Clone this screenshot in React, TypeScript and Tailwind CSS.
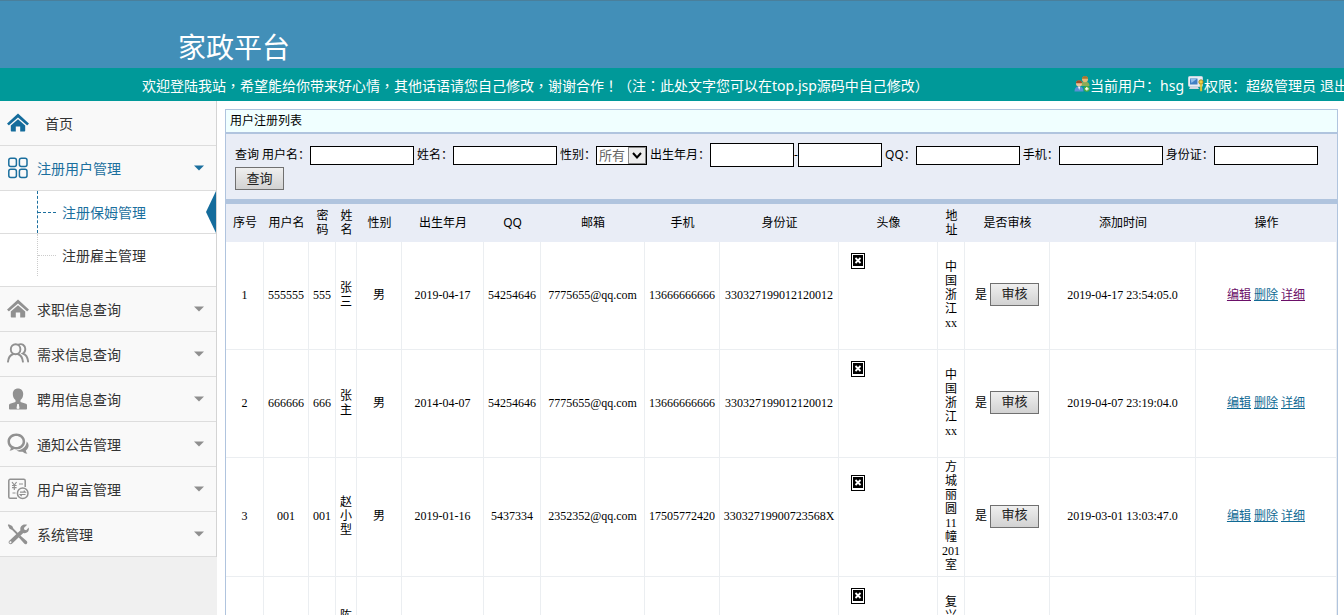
import { ReactNode } from 'react'

interface MenuItem {
  label: string
  icon: ReactNode
}

interface User {
  id: number
  username: string
  password: string
  name: string
  gender: string
  birthday: string
  qq: string
  email: string
  phone: string
  idCard: string
  address: string
  approved: string
  createdAt: string
  visited?: boolean
}

const users: User[] = [
  { id: 1, username: '555555', password: '555', name: '张三', gender: '男', birthday: '2019-04-17', qq: '54254646', email: '7775655@qq.com', phone: '13666666666', idCard: '330327199012120012', address: '中国浙江xx', approved: '是', createdAt: '2019-04-17 23:54:05.0', visited: true },
  { id: 2, username: '666666', password: '666', name: '张主', gender: '男', birthday: '2014-04-07', qq: '54254646', email: '7775655@qq.com', phone: '13666666666', idCard: '330327199012120012', address: '中国浙江xx', approved: '是', createdAt: '2019-04-07 23:19:04.0' },
  { id: 3, username: '001', password: '001', name: '赵小型', gender: '男', birthday: '2019-01-16', qq: '5437334', email: '2352352@qq.com', phone: '17505772420', idCard: '33032719900723568X', address: '方城丽圆11幢201室', approved: '是', createdAt: '2019-03-01 13:03:47.0' },
  { id: 4, username: '002', password: '002', name: '陈小型', gender: '女', birthday: '2019-01-16', qq: '5437334', email: '2352352@qq.com', phone: '17505772420', idCard: '330327199007235681', address: '复兴小区xx', approved: '是', createdAt: '2019-03-01 13:03:47.0' },
]

const columns = [
  { title: '序号', width: 'w-[38px]' },
  { title: '用户名', width: 'w-[45px]' },
  { title: '密码', width: 'w-[27px]' },
  { title: '姓名', width: 'w-[21px]' },
  { title: '性别', width: 'w-[45px]' },
  { title: '出生年月', width: 'w-[82px]' },
  { title: 'QQ', width: 'w-[57px]' },
  { title: '邮箱', width: 'w-[104px]' },
  { title: '手机', width: 'w-[75px]' },
  { title: '身份证', width: 'w-[119px]' },
  { title: '头像', width: 'w-[99px]' },
  { title: '地址', width: 'w-[27px]' },
  { title: '是否审核', width: 'w-[85px]' },
  { title: '添加时间', width: 'w-[146px]' },
  { title: '操作', width: '' },
]

function HomeIcon() {
  return (
    <svg width="22" height="22" viewBox="0 0 22 22" fill="currentColor">
      <path d="M11 1.6 21.6 11.2a.6.6 0 0 1 0 .9l-1 .9a.7.7 0 0 1-.9 0L11 5.4 2.3 13a.7.7 0 0 1-.9 0l-1-.9a.6.6 0 0 1 0-.9z" />
      <path d="M11 7.2l7.2 6.3v5c0 .6-.4 1-1 1h-4v-5H8.8v5h-4c-.6 0-1-.4-1-1v-5z" />
    </svg>
  )
}

function GridIcon() {
  return (
    <svg width="22" height="22" viewBox="0 0 22 22" fill="none" stroke="currentColor" strokeWidth="1.5">
      <rect x="1.8" y="1.3" width="7.6" height="8.2" rx="2" />
      <rect x="12.4" y="1.3" width="7.6" height="8.2" rx="2" />
      <rect x="1.8" y="12.3" width="7.6" height="8.2" rx="2" />
      <rect x="12.4" y="12.3" width="7.6" height="8.2" rx="2" />
    </svg>
  )
}

function UsersIcon() {
  return (
    <svg width="22" height="22" viewBox="0 0 22 22" fill="none" stroke="currentColor" strokeWidth="1.9" strokeLinecap="round">
      <ellipse cx="8.6" cy="6.2" rx="4.8" ry="5" />
      <path d="M1 18.600c.3-3.600 2-6.400 5.300-7.600M10.800 11c3.100 1.200 4.800 4 5.100 7.600" />
      <path d="M11.500 1.700c3.400-1.600 6.800.6 6.800 4.400 0 2-.9 3.600-2.400 4.400 3 1.200 4.800 3.800 5.200 8" />
    </svg>
  )
}

function PersonIcon() {
  return (
    <svg width="22" height="22" viewBox="0 0 22 22" fill="currentColor">
      <path d="M11 .5c3.200 0 5.200 2.200 5.200 5.400 0 2.800-1.200 5-2.700 6v2l5.500 1.800c.7.3 1 .8 1 1.500v3.500c0 .5-.3.800-.8.800H2.800c-.5 0-.8-.3-.8-.8v-3.500c0-.7.400-1.200 1-1.500l5.500-1.800v-2c-1.500-1-2.700-3.200-2.700-6C5.800 2.700 7.800.5 11 .5z" />
      <path d="M10.200 16h1.600l.7 4.300-1.500 1-1.500-1z" fill="#f9f9f9" />
    </svg>
  )
}

function ChatIcon() {
  return (
    <svg width="22" height="22" viewBox="0 0 22 22" fill="currentColor">
      <path fillRule="evenodd" d="M9.300.4c4.900 0 8.800 3.500 8.800 8s-3.900 8-8.800 8c-.8 0-1.600-.1-2.300-.3-1.300 1-2.800 1.600-4.500 1.700.7-.8 1.200-1.700 1.400-2.900C1.800 13.300.5 11 .5 8.400.5 3.900 4.400.4 9.300.4zm0 2.500C5.800 2.900 3 5.300 3 8.400s2.800 5.500 6.300 5.500 6.300-2.400 6.300-5.500-2.800-5.500-6.300-5.500z" />
      <path d="M19.700 8.500c1.200 1.100 1.900 2.500 1.900 4.100 0 2-1.100 3.700-2.800 4.900.2 1.200.7 2.200 1.600 3.200-1.900-.1-3.500-.8-4.800-2-2.300.3-4.400-.1-6.100-1.200 5.400-.1 9.900-3.700 10.200-9z" />
    </svg>
  )
}

function BillIcon() {
  return (
    <svg width="22" height="22" viewBox="0 0 22 22" fill="none" stroke="currentColor" strokeWidth="1.500">
      <path d="M10 20.300H3.200a1.400 1.400 0 0 1-1.400-1.400V2.700c0-.8.6-1.400 1.400-1.400h13.600c.8 0 1.400.6 1.400 1.400V9" />
      <path d="M5 4l2.300 3L9.600 4M7.300 7v5M5 7.500h4.600M5 9.600h4.600M12 6h4M5.500 15h3" strokeWidth="1.200" />
      <circle cx="15.700" cy="15.300" r="5.300" />
      <path d="M13 14.200h5.300l-1.500-1.600M18.500 16.500h-5.300l1.500 1.600" strokeWidth="1.200" />
    </svg>
  )
}

function ToolsIcon() {
  return (
    <svg width="22" height="22" viewBox="0 0 22 22" fill="currentColor">
      <path d="M1.700 1.200 5.200 3l1.200 2.600 5 5-1.300 1.300-5-5-2.500-1.200L.8 2.100z" />
      <path d="M13.300 12.400l6.400 5.700c.8.8.8 1.900.1 2.600s-1.900.7-2.600-.1l-5.600-6.400z" />
      <path d="M20.200 1.700l-3.300 3.200.5 1.800 1.800.5 2.500-2.600c.5 2-.1 3.500-1.100 4.500-1.200 1.100-2.800 1.300-4.300.8L5.200 20.600c-.8.8-2.200.8-3 0s-.8-2.100.1-2.900L13.500 7.200c-.5-1.500-.2-3.100.9-4.300C15.500 1.700 17 .9 20.200 1.700zM3.800 18.300a1 1 0 1 0 0 1.900 1 1 0 0 0 0-1.900z" fillRule="evenodd" />
    </svg>
  )
}

function Caret() {
  return (
    <svg width="10" height="6" viewBox="0 0 10 6" fill="currentColor">
      <path d="M0 .5h10L5 5.500z" />
    </svg>
  )
}

function AccountIcon() {
  return (
    <svg width="16" height="16" viewBox="0 0 16 16">
      <path d="M7 10c0-3 1-4.500 4-4.500S15.500 7 15.500 10z" fill="#8dac57" />
      <circle cx="11" cy="3.300" r="3" fill="#e3b878" />
      <path d="M8 2.800C8 1 9.200.1 11 .1s3.200 1 3 2.700z" fill="#a8742f" />
      <path d="M.5 15.500c0-3.500 1.500-5 4.500-5s4.500 1.500 4.500 5z" fill="#5b8fd6" />
      <path d="M4 10.600h2.200l-1 3.500z" fill="#fff" />
      <circle cx="5" cy="7.500" r="3" fill="#f0c39a" />
      <path d="M2 7.200C1.800 5.400 3 4.200 5 4.200s3.300 1.200 3 3z" fill="#9a4f2b" />
      <circle cx="12.800" cy="12.800" r="2.900" fill="#4fae3c" />
      <path d="M12.800 11v3.600M11 12.800h3.600" stroke="#fff" strokeWidth="1.200" />
    </svg>
  )
}

function PermissionIcon() {
  return (
    <svg width="16" height="16" viewBox="0 0 16 16">
      <rect x=".5" y=".5" width="14" height="10" rx="1" fill="#e8eef5" stroke="#c9d5e2" />
      <rect x="2" y="2.500" width="7.500" height="6" fill="#3f7fc4" />
      <path d="M2.500 3h6L3.500 7z" fill="#8fc0ee" />
      <path d="M2 11h8l1 2H1z" fill="#cfd8e2" />
      <circle cx="13" cy="6" r="2.200" fill="#f4cf45" stroke="#8f7a1d" strokeWidth=".8" />
      <path d="M12.200 8h1.700v6.500l-.9.900-.8-.9z" fill="#f4e045" stroke="#b9a01d" strokeWidth=".5" />
    </svg>
  )
}

function MissingImage() {
  return (
    <svg width="14" height="16" viewBox="0 0 14 16" shapeRendering="crispEdges">
      <rect width="14" height="16" fill="#000" />
      <rect x="1" y="1" width="12" height="14" fill="#fff" />
      <rect x="2" y="2" width="10" height="11" fill="#000" />
      <path d="M4.500 5l5 5M9.500 5l-5 5" stroke="#fff" strokeWidth="1.800" shapeRendering="auto" />
    </svg>
  )
}

const menu: MenuItem[] = [
  { label: '求职信息查询', icon: <HomeIcon /> },
  { label: '需求信息查询', icon: <UsersIcon /> },
  { label: '聘用信息查询', icon: <PersonIcon /> },
  { label: '通知公告管理', icon: <ChatIcon /> },
  { label: '用户留言管理', icon: <BillIcon /> },
  { label: '系统管理', icon: <ToolsIcon /> },
]

function Header() {
  return (
    <header className="text-white">
      <div className="h-[68px] border-t border-[#4a7f9b] bg-[#428fb8] pl-[178px] pt-7">
        <h1 className="text-[28px] leading-10 font-['Liberation_Serif','Noto_Sans_CJK_SC',serif]">家政平台</h1>
      </div>
      <div className="flex h-[33px] items-center justify-between overflow-hidden whitespace-nowrap bg-[#009999] pl-[142px] pt-[3px] text-sm">
        <p className="font-['Noto_Sans','Noto_Sans_CJK_TC',sans-serif]">
          欢迎登陆我站，希望能给你带来好心情，其他话语请您自己修改，谢谢合作！（注：此处文字您可以在top.jsp源码中自己修改）
        </p>
        <div className="-mr-1 flex items-center">
          <span className="pb-1"><AccountIcon /></span>
          <span className="mr-1">当前用户：hsg</span>
          <span className="pb-1"><PermissionIcon /></span>
          <span className="mr-1">权限：超级管理员</span>
          <a href="#logout">退出</a>
        </div>
      </div>
    </header>
  )
}

function Sidebar() {
  return (
    <aside className="w-[217px] shrink-0 bg-[#f0f0f0] text-sm text-[#333]">
      <nav className="border-r border-[#d4d4d4] bg-[#f9f9f9]">
        <a href="#home" className="flex h-[45px] items-center border-b border-[#ddd] pl-[7px]">
          <span className="text-[#146c9c]"><HomeIcon /></span>
          <span className="ml-4 pt-[2px]">首页</span>
        </a>

        <button type="button" className="flex h-[45px] w-full items-center border-b border-[#ddd] pl-[7px] pr-3 text-[#1b6f9e]">
          <GridIcon />
          <span className="ml-2 flex-1 pt-[2px] text-left">注册用户管理</span>
          <Caret />
        </button>

        {/* Submenu */}
        <div className="border-b border-[#ddd] bg-white pb-[10px]">
          <a href="#nannies" className="flex h-[43px] border-b border-[#ddd] pl-[37px] text-[#1b6f9e]">
            <span className="flex items-center border-l border-dashed border-[#1b6f9e]">
              <span className="w-[18px] border-t border-dashed border-[#1b6f9e]" />
            </span>
            <span className="ml-[6px] flex-1 self-center pt-[2px]">注册保姆管理</span>
            <svg width="10" height="42" viewBox="0 0 10 42" fill="#146c9c">
              <path d="M10 0v42L0 21z" />
            </svg>
          </a>
          <a href="#employers" className="flex h-[42px] pl-[37px]">
            <span className="flex items-center border-l border-dotted border-[#ccc]">
              <span className="w-[18px] border-t border-dotted border-[#ccc]" />
            </span>
            <span className="ml-[6px] self-center pt-[2px]">注册雇主管理</span>
          </a>
        </div>

        {menu.map((item) => (
          <button key={item.label} type="button" className="flex h-[45px] w-full items-center border-b border-[#ddd] pl-[7px] pr-3">
            <span className="text-[#919191]">{item.icon}</span>
            <span className="ml-2 flex-1 pt-[2px] text-left">{item.label}</span>
            <span className="text-[#8f8f8f]"><Caret /></span>
          </button>
        ))}
      </nav>
    </aside>
  )
}

function GrayButton({ children, type = 'button' }: { children: ReactNode; type?: 'button' | 'submit' }) {
  return (
    <button type={type} className="h-[23px] w-[49px] border border-[#707070] bg-linear-to-b from-[#efefef] to-[#d2d2d2] pb-[2px] text-[13px] leading-4 text-[#222]">
      {children}
    </button>
  )
}

function SearchField({ label }: { label: string }) {
  return (
    <label className="flex items-center">
      {label}
      <input type="text" className="h-[19px] w-[104px] border border-black bg-white px-1" />
    </label>
  )
}

function SearchForm() {
  return (
    <form className="flex flex-wrap items-center gap-x-[3px] bg-[#e9edf6] px-[9px] py-[9px]">
      <span>查询</span>
      <SearchField label="用户名：" />
      <SearchField label="姓名：" />
      <label className="flex items-center">
        性别：
        <span className="relative">
          <select className="block h-[19px] w-[51px] appearance-none border border-black bg-white pl-[2px] text-[13px] leading-4 text-[#666]">
            <option>所有</option>
            <option>男</option>
            <option>女</option>
          </select>
          <svg className="pointer-events-none absolute right-px top-px" width="18" height="17" viewBox="0 0 18 17">
            <rect x=".5" y=".5" width="17" height="16" fill="#ececec" stroke="#8a8a8a" />
            <path d="M5 6l4 4.500L13 6" fill="none" stroke="#000" strokeWidth="2" />
          </svg>
        </span>
      </label>
      <div className="flex items-center">
        <label className="flex items-center">
          出生年月：
          <input type="text" className="h-6 w-[84px] border border-black bg-white px-1" />
        </label>
        <span className="w-1">-</span>
        <input type="text" aria-label="出生年月截止" className="h-6 w-[84px] border border-black bg-white px-1" />
      </div>
      <SearchField label="QQ：" />
      <SearchField label="手机：" />
      <SearchField label="身份证：" />
      <GrayButton type="submit">查询</GrayButton>
    </form>
  )
}

function UserRow({ user }: { user: User }) {
  const linkColor = user.visited ? 'text-[#6b1068]' : 'text-[#116a94]'

  return (
    <tr className="*:border-b *:border-r *:border-[#ebeef1] *:px-[2px] *:pb-1 *:pt-[2px]">
      <td>{user.id}</td>
      <td>{user.username}</td>
      <td>{user.password}</td>
      <td>{user.name}</td>
      <td>{user.gender}</td>
      <td>{user.birthday}</td>
      <td>{user.qq}</td>
      <td>{user.email}</td>
      <td>{user.phone}</td>
      <td>{user.idCard}</td>
      <td>
        <div className="mx-auto h-[101px] w-[74px] pt-[9px]">
          <MissingImage />
        </div>
      </td>
      <td>{user.address}</td>
      <td>
        <div className="flex items-center justify-center gap-[3px]">
          {user.approved}
          <GrayButton>审核</GrayButton>
        </div>
      </td>
      <td>{user.createdAt}</td>
      <td>
        <div className="flex justify-center gap-[3px] underline">
          <a href="#edit" className={linkColor}>编辑</a>
          <a href="#delete" className="text-[#116a94]">删除</a>
          <a href="#detail" className={linkColor}>详细</a>
        </div>
      </td>
    </tr>
  )
}

function UserTable() {
  return (
    <table className="w-full table-fixed border-separate border-spacing-0 text-center leading-[14px] font-['Liberation_Serif','Noto_Sans_CJK_SC',serif]">
      <thead>
        <tr className="h-[38px] bg-[#e9edf6]">
          {columns.map((col) => (
            <th key={col.title} className={`${col.width} px-[2px] font-normal font-['Noto_Sans','Noto_Sans_CJK_SC',sans-serif]`}>
              {col.title}
            </th>
          ))}
        </tr>
      </thead>
      <tbody>
        {users.map((user) => (
          <UserRow key={user.id} user={user} />
        ))}
      </tbody>
    </table>
  )
}

export default function App() {
  return (
    <div className="flex h-screen flex-col overflow-hidden bg-white font-['Noto_Sans','Noto_Sans_CJK_SC',sans-serif]">
      <Header />
      <div className="flex min-h-0 flex-1">
        <Sidebar />
        <main className="min-w-0 flex-1 pl-2 pr-[6px] pt-2 text-xs text-black">
          <section className="border border-[#b0c4de]">
            <h2 className="border-b-2 border-[#b0c4de] bg-[#f0ffff] px-1 py-[3px]">用户注册列表</h2>
            <SearchForm />
            <div className="border-t-[5px] border-[#b0c4de]">
              <UserTable />
            </div>
          </section>
        </main>
      </div>
    </div>
  )
}
